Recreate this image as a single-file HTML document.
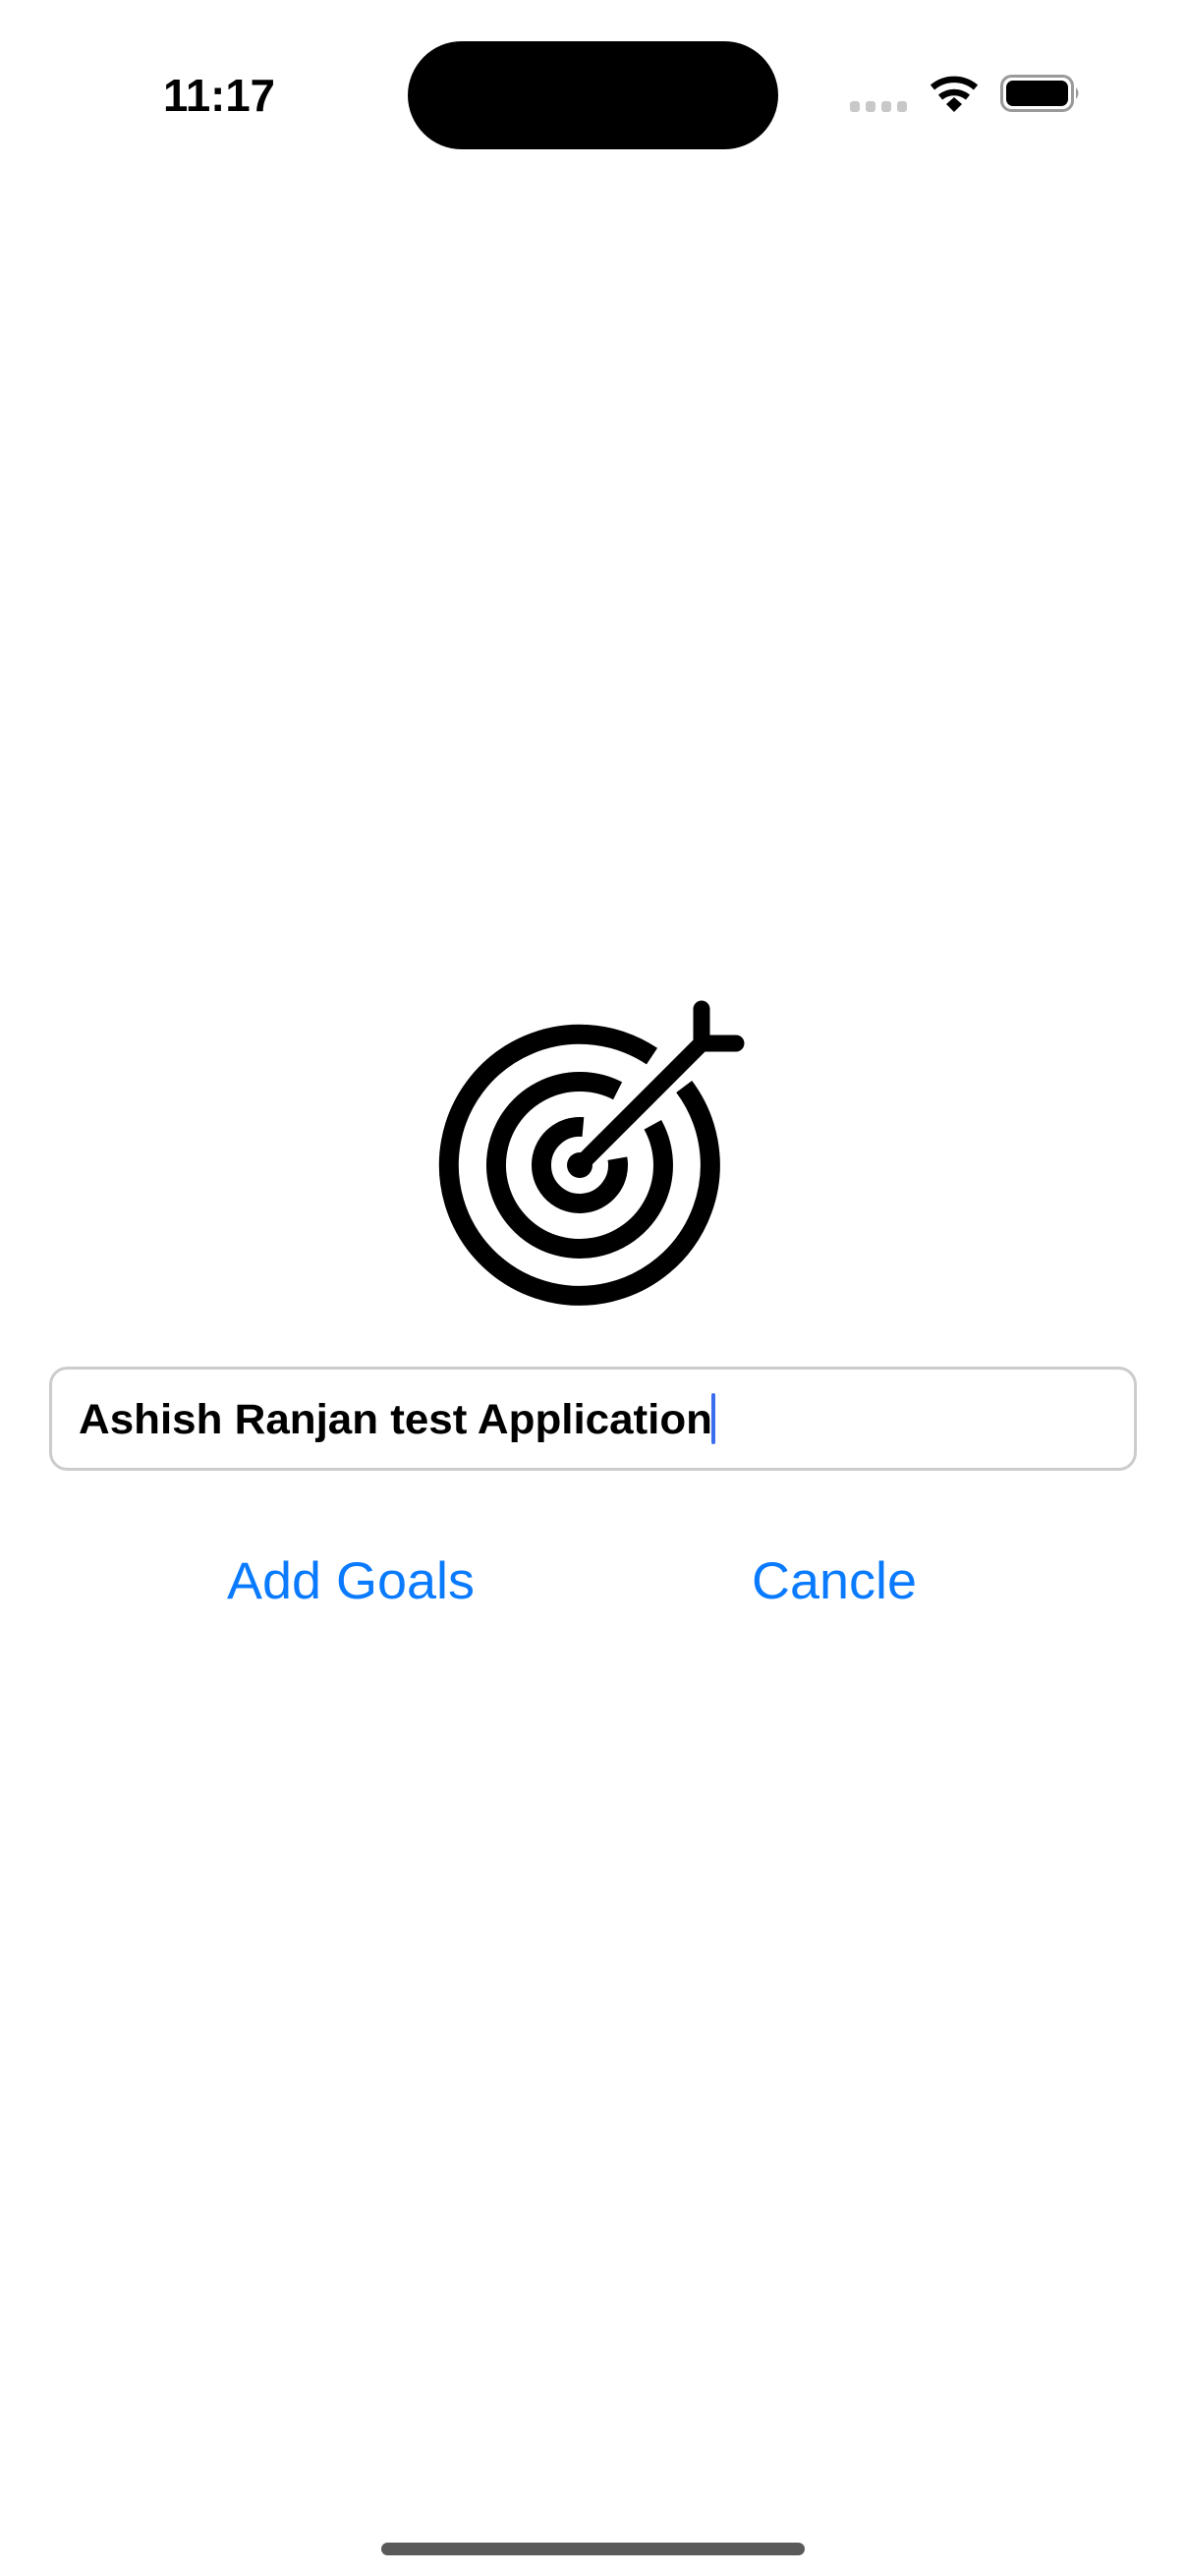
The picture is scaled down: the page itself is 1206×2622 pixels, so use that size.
<!DOCTYPE html>
<html><head><meta charset="utf-8"><style>
html,body{margin:0;padding:0;background:#fff;width:1206px;height:2622px;overflow:hidden}
svg{display:block}
</style></head><body>
<svg width="1206" height="2622" viewBox="0 0 1206 2622" xmlns="http://www.w3.org/2000/svg">
<rect width="1206" height="2622" fill="#fff"/>
<!-- status bar -->
<text x="166" y="113" font-family="Liberation Sans, sans-serif" font-weight="bold" font-size="46" textLength="114" lengthAdjust="spacingAndGlyphs" fill="#000">11:17</text>
<rect x="415" y="42" width="377" height="110" rx="55" fill="#000"/>
<g fill="#c8c8c8">
<rect x="865" y="103" width="10" height="11" rx="3"/>
<rect x="881" y="103" width="10" height="11" rx="3"/>
<rect x="897" y="103" width="10" height="11" rx="3"/>
<rect x="913" y="103" width="10" height="11" rx="3"/>
</g>
<g fill="none" stroke="#000" stroke-width="6.5">
<path d="M949 89 A34 34 0 0 1 993 89"/>
<path d="M957 99 A22 22 0 0 1 985 99"/>
</g>
<path d="M963 106 L971 99 L979 106 L971 114 Z" fill="#000"/>
<rect x="1019.5" y="77.5" width="72" height="35" rx="10" fill="none" stroke="#9a9a9a" stroke-width="3"/>
<rect x="1024" y="82" width="63" height="26" rx="7" fill="#000"/>
<path d="M1095 89 Q1100 95 1095 101 Z" fill="#9a9a9a"/>
<!-- target icon -->
<g fill="none" stroke="#000" stroke-width="20">
<!-- outer r=133, gap -56.5..-37 -->
<path d="M696.2 1106 A133 133 0 1 1 663.5 1075.1"/>
<!-- middle r=85, gap -63..-29 -->
<path d="M664.3 1144.8 A85 85 0 1 1 628.6 1110.3"/>
<!-- inner r=39, gap -85..-10 -->
<path d="M628.4 1179.2 A39 39 0 1 1 593.4 1147.1"/>
</g>
<circle cx="590" cy="1186" r="13" fill="#000"/>
<line x1="590" y1="1186" x2="714" y2="1062" stroke="#000" stroke-width="17"/>
<line x1="714" y1="1027" x2="714" y2="1062" stroke="#000" stroke-width="17" stroke-linecap="round"/>
<line x1="714" y1="1062" x2="749" y2="1062" stroke="#000" stroke-width="17" stroke-linecap="round"/>
<!-- text field -->
<rect x="51.5" y="1392.5" width="1104" height="103" rx="17" fill="#fff" stroke="#cccccc" stroke-width="3"/>
<text x="80" y="1459" font-family="Liberation Sans, sans-serif" font-weight="bold" font-size="43" textLength="645" lengthAdjust="spacingAndGlyphs" fill="#000">Ashish Ranjan test Application</text>
<rect x="724" y="1418" width="4" height="52" rx="2" fill="#3a6df0"/>
<!-- buttons -->
<text x="231" y="1627" font-family="Liberation Sans, sans-serif" font-size="53" textLength="252" lengthAdjust="spacingAndGlyphs" fill="#0a7aff">Add Goals</text>
<text x="765" y="1627" font-family="Liberation Sans, sans-serif" font-size="53" textLength="168" lengthAdjust="spacingAndGlyphs" fill="#0a7aff">Cancle</text>
<!-- home indicator -->
<rect x="388" y="2588" width="431" height="13" rx="6.5" fill="#5a5a5a"/>
</svg>
</body></html>
